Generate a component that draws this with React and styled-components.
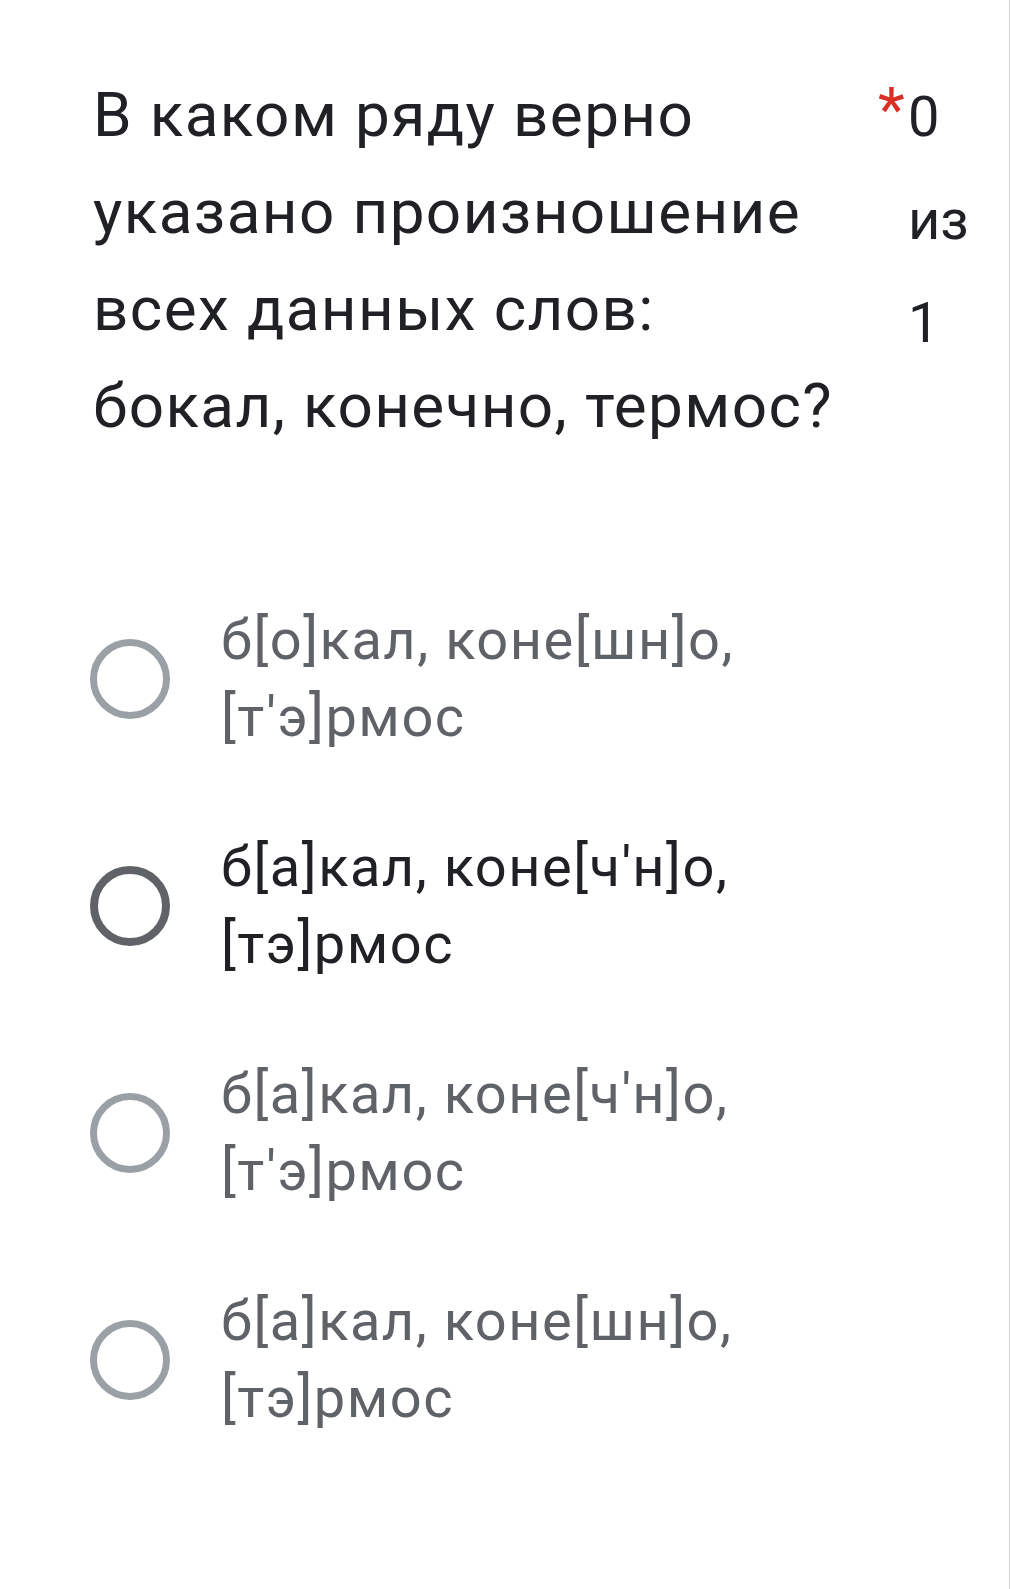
import React from "react";
import styled, { createGlobalStyle } from "styled-components";

const GlobalStyle = createGlobalStyle`
    html, body {
        margin: 0;
        padding: 0;
        background: #ffffff;
    }
    body {
        font-family: Roboto, "Liberation Sans", Arial, sans-serif;
        -webkit-font-smoothing: antialiased;
    }
`;

const Page = styled.div`
    box-sizing: border-box;
    width: 1010px;
    min-height: 1589px;
    border-right: 1px solid #d4d4d4;
    padding: 66px 0 0 93px;
`;

const Header = styled.div`
    display: flex;
    justify-content: space-between;
    align-items: flex-start;
`;

const Title = styled.div`
    color: #202124;
    font-size: 62px;
    line-height: 97px;
    font-weight: 400;
    letter-spacing: 1.4px;
`;

const Points = styled.div`
    position: relative;
    width: 101px;
    color: #202124;
    font-size: 56px;
    line-height: 103px;
`;

const Required = styled.span`
    position: absolute;
    left: -30px;
    top: -8px;
    color: #d93025;
    font-size: 62px;
`;

const Options = styled.div`
    display: flex;
    flex-direction: column;
    gap: 73px;
    margin: 148px 0 0 -3px;
`;

const Option = styled.label`
    display: flex;
    align-items: center;
    gap: 51px;
    cursor: pointer;
`;

const Radio = styled.span`
    flex: none;
    box-sizing: border-box;
    width: 80px;
    height: 80px;
    border-radius: 50%;
    border: ${({ active }) => (active ? "8px solid #5f6368" : "7px solid #9aa0a6")};
`;

const OptionText = styled.div`
    color: ${({ active }) => (active ? "#202124" : "#5f6368")};
    font-size: 56px;
    line-height: 77px;
    letter-spacing: 1.5px;
`;

const options = [
    { first: "б[о]кал, коне[шн]о,", second: "[т'э]рмос", active: false },
    { first: "б[а]кал, коне[ч'н]о,", second: "[тэ]рмос", active: true },
    { first: "б[а]кал, коне[ч'н]о,", second: "[т'э]рмос", active: false },
    { first: "б[а]кал, коне[шн]о,", second: "[тэ]рмос", active: false },
];

export default function App() {
    return (
        <>
            <GlobalStyle />
            <Page>
                <Header>
                    <Title>
                        В каком ряду верно
                        <br />
                        указано произношение
                        <br />
                        всех данных слов:
                        <br />
                        бокал, конечно, термос?
                    </Title>
                    <Points>
                        <Required>*</Required>0 из 1
                    </Points>
                </Header>
                <Options>
                    {options.map((o, i) => (
                        <Option key={i}>
                            <Radio active={o.active} />
                            <OptionText active={o.active}>
                                {o.first}
                                <br />
                                {o.second}
                            </OptionText>
                        </Option>
                    ))}
                </Options>
            </Page>
        </>
    );
}
